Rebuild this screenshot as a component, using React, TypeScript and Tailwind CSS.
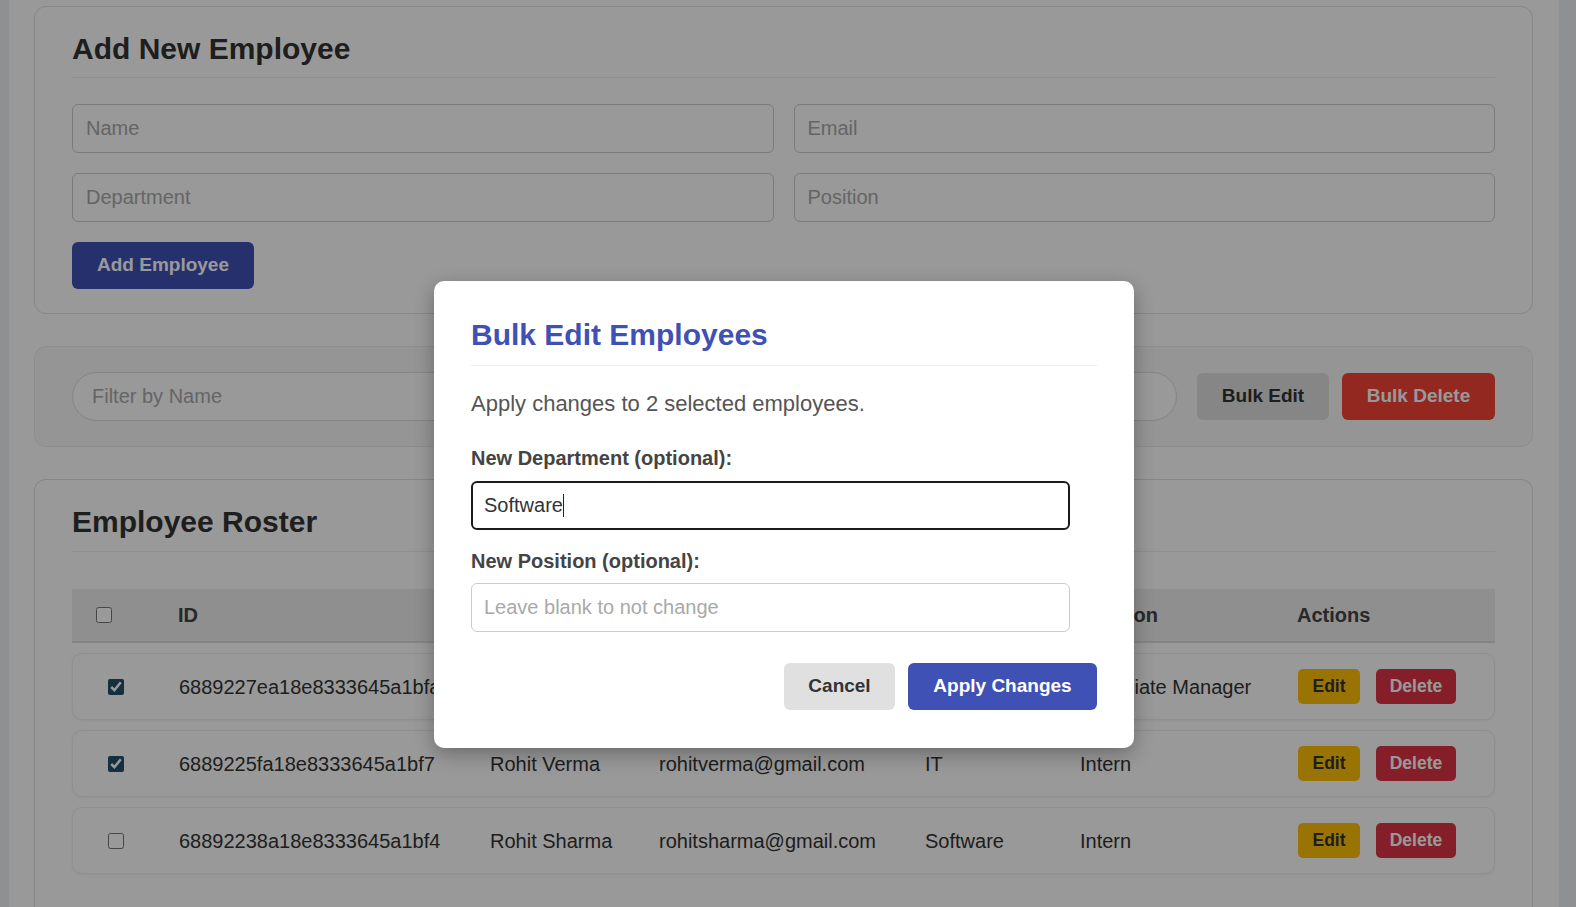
const employees = [
  {
    id: '6889227ea18e8333645a1bfa',
    name: 'Ankit Kumar',
    email: 'ankitkumar@gmail.com',
    department: 'Sales',
    position: 'Associate Manager',
    checked: true,
  },
  {
    id: '6889225fa18e8333645a1bf7',
    name: 'Rohit Verma',
    email: 'rohitverma@gmail.com',
    department: 'IT',
    position: 'Intern',
    checked: true,
  },
  {
    id: '68892238a18e8333645a1bf4',
    name: 'Rohit Sharma',
    email: 'rohitsharma@gmail.com',
    department: 'Software',
    position: 'Intern',
    checked: false,
  },
]

const cols = 'grid grid-cols-[106px_311px_169px_266px_155px_218px_1fr] items-center'

function AddEmployeeCard() {
  const field =
    'h-[49px] rounded-[6px] border border-[#cccccc] bg-white pl-[13px] text-[20px] text-[#333] outline-none placeholder:text-[#a9a9a9]'
  return (
    <section className="rounded-[12px] border border-[#e0e0e0] bg-white px-[37px] pt-[25px] pb-[24px]">
      <h2 className="border-b border-[#eeeeee] pb-[11px] text-[30px] font-bold leading-[34px] text-[#333]">
        Add New Employee
      </h2>
      <div className="mt-[26px] grid grid-cols-2 gap-[20px]">
        <input className={field} placeholder="Name" />
        <input className={field} placeholder="Email" />
        <input className={field} placeholder="Department" />
        <input className={field} placeholder="Position" />
      </div>
      <button className="mt-[20px] h-[47px] w-[182px] rounded-[6px] bg-[#3f51b5] text-[19px] font-bold text-white">
        Add Employee
      </button>
    </section>
  )
}

function FilterCard() {
  return (
    <section className="mt-[32px] flex items-center rounded-[12px] border border-[#ececec] bg-[#f8f8f8] px-[37px] py-[25px]">
      <input
        className="h-[49px] flex-1 rounded-full border border-[#dddddd] bg-white pl-[19px] text-[20px] outline-none placeholder:text-[#a9a9a9]"
        placeholder="Filter by Name"
      />
      <button className="ml-[20px] h-[47px] w-[132px] rounded-[6px] bg-[#e0e0e0] text-[19px] font-bold text-[#333]">
        Bulk Edit
      </button>
      <button className="ml-[13px] h-[47px] w-[153px] rounded-[6px] bg-[#f44336] text-[19px] font-bold text-white">
        Bulk Delete
      </button>
    </section>
  )
}

function RosterCard() {
  return (
    <section className="mt-[32px] rounded-t-[12px] border border-b-0 border-[#e0e0e0] bg-white px-[37px] pt-[25px] pb-[40px]">
      <h2 className="border-b border-[#eeeeee] pb-[12px] text-[30px] font-bold leading-[34px] text-[#333]">
        Employee Roster
      </h2>
      <div className="mt-[37px] flex flex-col gap-[10px]">
        <div className={`${cols} h-[54px] border-b-2 border-[#dddddd] bg-[#eeeeee] text-[20px] font-bold text-[#444]`}>
          <div className="pl-[24px]">
            <input type="checkbox" className="block h-[16px] w-[16px]" />
          </div>
          <div>ID</div>
          <div>Name</div>
          <div>Email</div>
          <div>Department</div>
          <div>Position</div>
          <div>Actions</div>
        </div>
        {employees.map((e) => (
          <div
            key={e.id}
            className={`${cols} h-[67px] rounded-[10px] border border-[#efefef] bg-white text-[20px] text-[#333] shadow-[0_1px_3px_rgba(0,0,0,0.05)]`}
          >
            <div className="pl-[35px]">
              <input
                type="checkbox"
                defaultChecked={e.checked}
                className="block h-[16px] w-[16px] accent-[#1e5069]"
              />
            </div>
            <div className="whitespace-nowrap">{e.id}</div>
            <div className="whitespace-nowrap">{e.name}</div>
            <div className="whitespace-nowrap">{e.email}</div>
            <div className="whitespace-nowrap">{e.department}</div>
            <div className="whitespace-nowrap">{e.position}</div>
            <div className="flex items-center gap-[16px]">
              <button className="h-[35px] w-[62px] rounded-[5px] bg-[#ffc107] text-[17.5px] font-bold text-[#333]">
                Edit
              </button>
              <button className="h-[35px] w-[80px] rounded-[5px] bg-[#dc3545] text-[17.5px] font-bold text-white">
                Delete
              </button>
            </div>
          </div>
        ))}
      </div>
    </section>
  )
}

function BulkEditModal() {
  return (
    <div className="absolute left-[434px] top-[281px] w-[700px] rounded-[10px] bg-white px-[37px] pt-[37px] pb-[38px] shadow-[0_6px_20px_rgba(0,0,0,0.3)]">
      <h2 className="border-b border-[#eeeeee] pb-[13px] text-[30px] font-bold leading-[34px] text-[#3f51b5]">
        Bulk Edit Employees
      </h2>
      <p className="mt-[25px] text-[22px] leading-[25px] text-[#555]">
        Apply changes to 2 selected employees.
      </p>
      <label className="mt-[31px] block text-[20px] font-bold leading-[23px] text-[#444]">
        New Department (optional):
      </label>
      <div className="relative mt-[11px] w-[599px]">
        <input
          className="block h-[49px] w-full rounded-[6px] border-2 border-[#1a1a1a] bg-white pl-[11px] text-[20px] text-[#333] outline-none"
          defaultValue="Software"
        />
        <span className="absolute left-[92px] top-[13px] h-[23px] w-px bg-[#222]" />
      </div>
      <label className="mt-[20px] block text-[20px] font-bold leading-[23px] text-[#444]">
        New Position (optional):
      </label>
      <input
        className="mt-[10px] block h-[49px] w-[599px] rounded-[6px] border border-[#cccccc] bg-white pl-[12px] text-[20px] text-[#333] outline-none placeholder:text-[#a9a9a9]"
        placeholder="Leave blank to not change"
      />
      <div className="mt-[31px] flex justify-end gap-[13px]">
        <button className="h-[47px] w-[111px] rounded-[6px] bg-[#e0e0e0] text-[19px] font-bold text-[#333]">
          Cancel
        </button>
        <button className="h-[47px] w-[189px] rounded-[6px] bg-[#3f51b5] text-[19px] font-bold text-white">
          Apply Changes
        </button>
      </div>
    </div>
  )
}

export default function App() {
  return (
    <div className="relative h-[907px] w-[1576px] overflow-hidden bg-[#eef0f4] font-['Liberation_Sans',Arial,sans-serif]">
      <div className="ml-[9px] h-full w-[1550px] bg-white pl-[25px] pr-[26px] pt-[6px]">
        <AddEmployeeCard />
        <FilterCard />
        <RosterCard />
      </div>
      <div className="absolute inset-0 bg-black/40" />
      <BulkEditModal />
    </div>
  )
}
